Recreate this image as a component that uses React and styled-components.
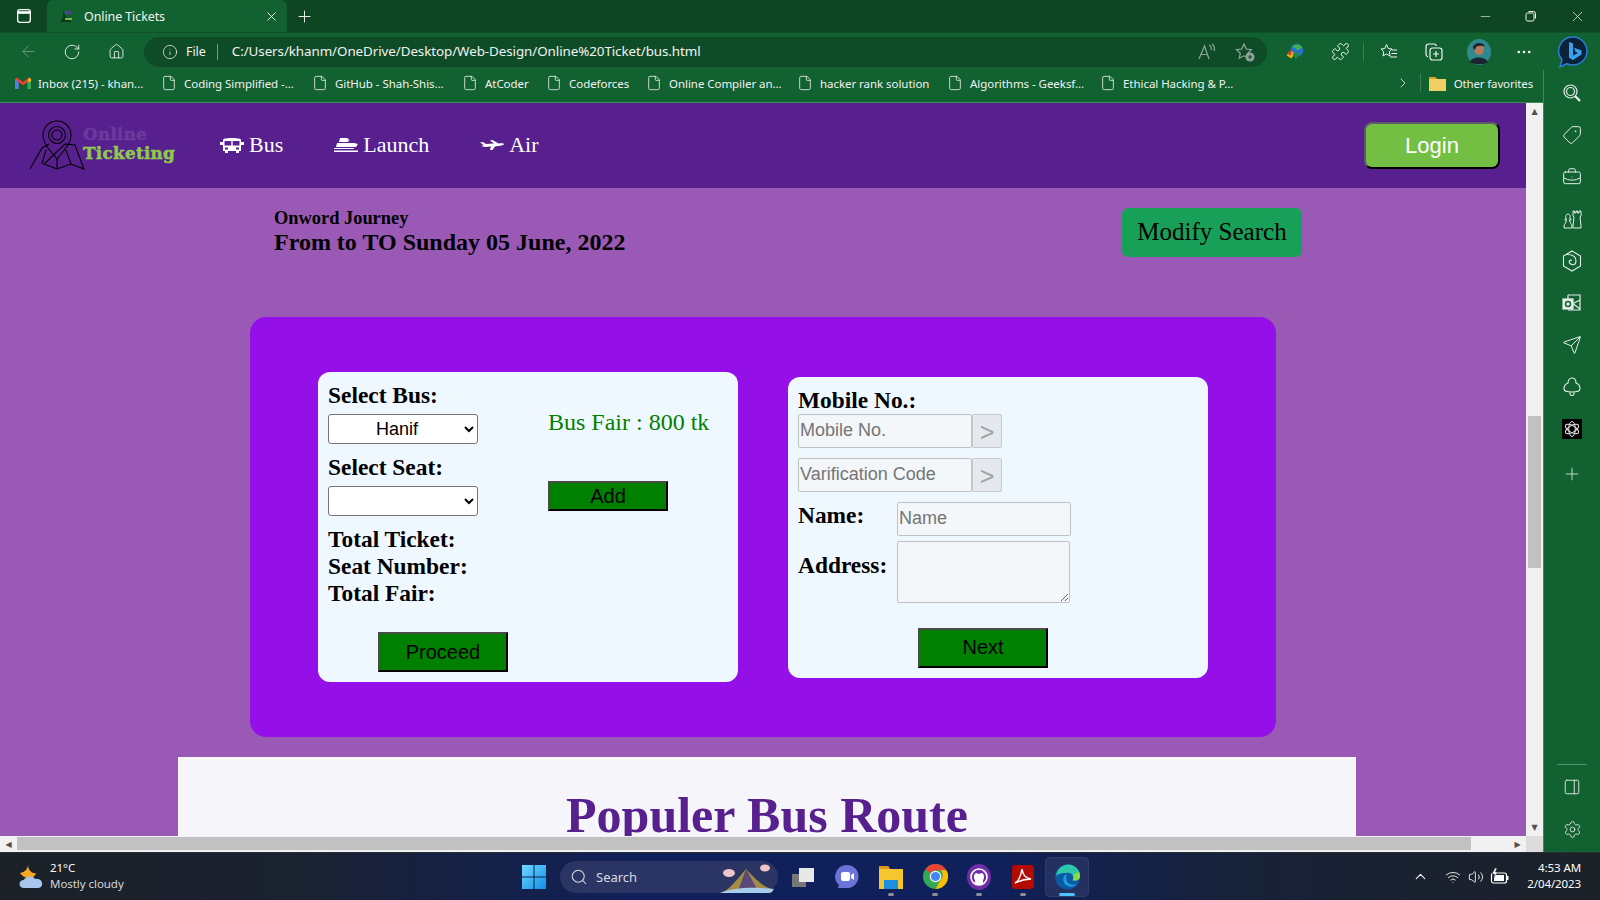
import React from 'react';
import styled, { createGlobalStyle } from 'styled-components';
import { ArrowLeft, RotateCw, Home, Info, Plus, X, Minus, Puzzle, ChevronRight, ChevronUp, Tag, BriefcaseBusiness, Send, Search, PanelRight, Settings, File, MoreHorizontal, Volume2, Wifi } from 'lucide-react';

const Global = createGlobalStyle`
  html, body { margin: 0; padding: 0; overflow: hidden; background: #116131; }
  * { box-sizing: border-box; }
  #root { width: 1600px; height: 900px; }
`;
const UI = `"Noto Sans", "Open Sans", sans-serif`;
const Serif = `"Liberation Serif", serif`;
const Sans = `"Liberation Sans", Arial, sans-serif`;

const Shell = styled.div`
  width: 1600px; height: 900px; display: flex; flex-direction: column; overflow: hidden;
  font-family: ${UI}; color: #fff;
`;
const TabStrip = styled.div`
  height: 32px; flex: none; display: flex; align-items: stretch; background: #0e4522;
`;
const Slot = styled.div`
  flex: none; width: ${p => p.$w}px; display: flex; align-items: center; justify-content: center;
  color: ${p => p.$c || '#f2f6f3'}; margin-left: ${p => p.$ml || 0}px;
`;
const Tab = styled.div`
  width: 240px; flex: none; background: #116131; border-radius: 6px 6px 0 0;
  display: flex; align-items: center; padding: 0 8px 0 11px; font-size: 12.5px;
`;
const TabTitle = styled.span`
  flex: 1; margin-left: 10px; letter-spacing: -0.1px; color: #f3f3f3;
`;
const WindowControls = styled.div`
  margin-left: auto; display: flex;
`;
const Toolbar = styled.div`
  height: 38px; flex: none; display: flex; align-items: center; background: #116131;
  border-top: 1px solid #0f5229; padding-left: 6px;
`;
const Address = styled.div`
  width: 1123px; height: 30px; margin-left: 6px; border-radius: 15px; background: #0e4c28;
  display: flex; align-items: center; font-size: 12.5px; color: #f2f2f2; flex: none;
`;
const AddrFile = styled.span`
  margin-left: 7px; letter-spacing: -0.05px;
`;
const AddrSep = styled.span`
  width: 1px; height: 16px; background: #6f9a80; margin: 0 14px 0 11px;
`;
const AddrUrl = styled.span`
  flex: 1; font-size: 13.4px; letter-spacing: -0.08px; white-space: nowrap; padding-bottom: 2px;
`;
const VSep = styled.span`
  width: 1px; height: 18px; background: #3d7c57; flex: none; margin: ${p => p.$m || '0'};
`;
const Body = styled.div`
  flex: 1; display: flex; min-height: 0;
`;
const Main = styled.div`
  width: 1543px; flex: none; display: flex; flex-direction: column; min-height: 0;
`;
const Bookmarks = styled.div`
  height: 33px; flex: none; background: #116131; border-bottom: 1px solid #3b8a5c;
  display: flex; align-items: center; font-size: 11.5px; color: #f2f2f2; padding: 0 0 6px 15px;
`;
const Bookmark = styled.div`
  width: ${p => p.$w}px; flex: none; display: flex; align-items: center; white-space: nowrap; letter-spacing: -0.05px;
  svg { flex: none; margin-right: ${p => p.$gap || 7}px; }
`;
const BookmarksEnd = styled.div`
  margin-left: auto; display: flex; align-items: center; padding-right: 10px;
`;
const FavLabel = styled.span`
  letter-spacing: -0.15px; margin-left: 8px;
`;
const ViewRow = styled.div`
  flex: 1; display: flex; min-height: 0;
`;
const Page = styled.div`
  width: 1526px; flex: none; background: #9b59b6; overflow: hidden; color: #000; font-family: ${Serif};
`;
const SiteHeader = styled.header`
  height: 85px; background: #58208e; display: flex; align-items: center; padding: 0 26px 0 28px;
`;
const Logo = styled.div`
  width: 172px; flex: none; display: flex; align-items: center;
`;
const LogoText = styled.div`
  margin: 0 0 3px -3px; font-family: "DejaVu Serif", serif; font-weight: 900; font-size: 16.8px; line-height: 19px;
  letter-spacing: 0.3px;
`;
const LogoWord = styled.div`
  color: ${p => p.$c}; -webkit-text-stroke: 0.5px ${p => p.$c};
`;
const Nav = styled.nav`
  display: flex; align-items: center; gap: 51px; margin-left: 20px; padding-bottom: 2px; color: #fff; font-size: 22px;
`;
const NavItem = styled.a`
  display: flex; align-items: center; gap: 5px;
`;
const LoginBtn = styled.button`
  margin-left: auto; width: 136px; height: 47px; border-radius: 8px; background: #72bf44; color: #fff;
  font: 22px ${Sans}; border: 2.5px solid; border-color: #5f5a6b #000 #000 #5f5a6b;
`;
const SearchRow = styled.section`
  margin: 20px 0 60px 274px; width: 1028px; height: 49px; display: flex; justify-content: space-between;
`;
const JourneyLine = styled.div`
  font-weight: bold; font-size: 18.4px; line-height: 20px;
`;
const JourneyDate = styled.div`
  font-weight: bold; font-size: 24px; line-height: 26px; margin-top: 1px;
`;
const ModifyBtn = styled.button`
  width: 180px; height: 49px; border: none; border-radius: 6px; background: #18a058; color: #000;
  font: 25px ${Serif}; padding: 0 0 2px;
`;
const Panel = styled.section`
  margin-left: 250px; width: 1026px; height: 420px; background: #9510e8; border-radius: 16px;
  display: flex; align-items: flex-start; gap: 50px; padding-left: 68px;
`;
const Card = styled.div`
  width: 420px; height: ${p => p.$h}px; margin-top: ${p => p.$top}px; background: #f0f8ff; border-radius: 12px;
  padding: 10px; display: flex;
`;
const Col = styled.div`
  width: ${p => p.$w}px; flex: none; display: flex; flex-direction: column; align-items: flex-start;
`;
const Label = styled.div`
  font-weight: bold; font-size: 23.4px; line-height: 27px; margin-top: ${p => p.$mt || 0}px; white-space: nowrap;
  width: ${p => p.$w ? p.$w + 'px' : 'auto'}; flex: none;
`;
const Select = styled.select`
  width: 150px; height: 30px; margin-top: 5px; background: #fff; border: 1px solid #767676; border-radius: 3px;
  font: 18px ${Sans}; color: #000; text-align: center;
`;
const GreenBtn = styled.button`
  width: ${p => p.$w}px; height: ${p => p.$h}px; margin: ${p => p.$m}; background: #008000; color: #000;
  font: 20px ${Sans}; padding: 0 0 ${p => p.$pb || 0}px; border: 2px solid; border-color: #4a4a4a #000 #000 #4a4a4a;
`;
const Fare = styled.div`
  font-size: 24px; line-height: 28px; color: #008000; margin-top: 26px; white-space: nowrap;
`;
const FieldRow = styled.div`
  display: flex; align-items: flex-start; margin-top: ${p => p.$mt || 0}px;
`;
const TextField = styled.input`
  width: ${p => p.$w || 174}px; height: 34px; background: #f3f7fa; border: 1px solid #bfc3c8; border-radius: 2px;
  font: 18px ${Sans}; padding: 0 1px 1px; outline: none;
  &::placeholder { color: #757575; }
`;
const GoBtn = styled.button`
  width: 30px; height: 34px; background: #e5e8ed; border: 1px solid #c6c9ce; border-radius: 2px; padding: 3px 0 0;
  color: #9fa2a8; font: 25px ${Sans};
`;
const AddressArea = styled.textarea`
  width: 173px; height: 62px; background: #f3f7fa; border: 1px solid #bfc3c8; border-radius: 2px; outline: none;
`;
const RouteSection = styled.section`
  margin: 20px 0 0 178px; width: 1178px; height: 200px; background: #f5f5fa; padding-top: 28px;
`;
const RouteTitle = styled.h2`
  margin: 0; text-align: center; font: bold 50px/60px ${Serif}; color: #58208e;
`;
const VScroll = styled.div`
  width: 17px; flex: none; background: #f1f1f1; display: flex; flex-direction: column; align-items: center; color: #505050;
`;
const Thumb = styled.div`
  width: 13px; height: 152px; margin-top: 296px; background: #c1c1c1;
`;
const ArrowV = styled.div`
  flex: none; height: 17px; width: 100%; display: flex; align-items: center; justify-content: center;
  font-size: 8px; line-height: 1; margin-top: ${p => p.$auto ? 'auto' : '0'}; font-family: "DejaVu Sans", sans-serif;
`;
const HScroll = styled.div`
  height: 16px; flex: none; background: #f1f1f1; display: flex; align-items: center; color: #505050;
`;
const HThumb = styled.div`
  width: 1454px; height: 13px; background: #c1c1c1; margin-bottom: 1px;
`;
const ArrowH = styled.div`
  width: 17px; flex: none; text-align: center; font-size: 8px; font-family: "DejaVu Sans", sans-serif;
`;
const HSpacer = styled.div`
  flex: 1;
`;
const Corner = styled.div`
  width: 17px; flex: none; height: 100%; background: #dcdcdc;
`;
const Sidebar = styled.aside`
  width: 57px; flex: none; background: #116131; border-left: 1px solid #3b8a5c;
  display: flex; flex-direction: column; align-items: center; padding: 2px 0; color: #e6eee9;
`;
const SideSlot = styled.div`
  height: ${p => p.$h || 42}px; width: 100%; display: flex; align-items: center; justify-content: center; flex: none;
`;
const FlippedTag = styled(Tag)`
  transform: scaleX(-1);
`;
const SideRule = styled.div`
  width: 30px; height: 1px; background: #4f9570; margin-top: auto; margin-bottom: 1px;
`;
const Taskbar = styled.footer`
  height: 48px; flex: none; display: flex; align-items: center; position: relative;
  background: linear-gradient(90deg, #1c2128 0, #1b2230 18%, #10205a 40%, #10205a 62%, #182238 78%, #1c2128 100%);
  border-top: 1px solid #2a3038;
`;
const Weather = styled.div`
  width: 522px; flex: none; display: flex; align-items: center; padding-left: 18px; font-size: 11.5px; line-height: 16px;
`;
const WeatherText = styled.div`
  margin: 0 0 2px 6px; letter-spacing: -0.05px;
  div:last-child { color: #d3d6da; }
`;
const WinBtn = styled.div`
  width: 38px; flex: none; display: flex;
`;
const SearchPill = styled.div`
  width: 218px; height: 32px; flex: none; border-radius: 16px; background: #2a3563; display: flex; align-items: center;
  padding: 0 2px 0 10px; font-size: 13px; color: #d7dae2; margin-right: 3px;
  span { margin-left: 8px; flex: 1; }
`;
const TaskIcon = styled.div`
  width: 44px; height: 40px; flex: none; display: flex; align-items: center; justify-content: center; position: relative;
  border-radius: 5px;
  ${p => p.$active && 'background: #24305f; box-shadow: inset 0 0 0 1px #303b68;'}
  &::after {
    content: ''; position: absolute; bottom: 1px; left: 50%; transform: translateX(-50%);
    width: ${p => p.$active ? 16 : 6}px; height: 3px; border-radius: 2px;
    background: ${p => p.$active ? '#4cc2ff' : p.$dot ? '#8a8f98' : 'transparent'};
  }
`;
const Tray = styled.div`
  margin-left: auto; display: flex; align-items: center; padding-right: 19px;
`;
const Clock = styled.div`
  text-align: right; font-size: 11.5px; line-height: 16px; margin: 0 0 2px 15px; letter-spacing: -0.1px;
`;

const PageIcon = () => <File size={16} strokeWidth={1.2} color="#f4f4f4" />;
const TabsIcon = () => (
  <svg width="16" height="16" viewBox="0 0 16 16" fill="none" stroke="#fff" strokeWidth="1.300">
    <rect x="1.700" y="1.700" width="12.600" height="12.600" rx="2" /><path d="M1.700 4.500h12.600" strokeWidth="2.600" />
  </svg>
);
const RestoreIcon = () => (
  <svg width="12" height="12" viewBox="0 0 12 12" fill="none" stroke="#f2f6f3" strokeWidth="1">
    <rect x="1" y="3" width="8" height="8" rx="1.500" /><path d="M3.500 1.500h5a2 2 0 0 1 2 2v5" />
  </svg>
);
const BusIcon = () => (
  <svg width="24" height="16" viewBox="0 0 24 16">
    <path fillRule="evenodd" fill="#fff" d="M3 2.500C5 .5 19 .5 21 2.500V5h3v3h-3v6h-2v2h-3v-2H8v2H5v-2H3V8H0V5h3zM4.500 4v4.500h6.800V4zM12.700 4v4.500h6.800V4zM5 10.500v2h3v-2zM16 10.500v2h3v-2z" />
  </svg>
);
const ShipIcon = () => (
  <svg width="24" height="14" viewBox="0 0 24 14" fill="#fff">
    <path d="M6 0h7l3 2.500h-2.500L15 4H5zM3 5h17l4 1-2 3H2zM0 10h20v1H0zM0 12.500h24V14H0z" />
  </svg>
);
const PlaneIcon = () => (
  <svg width="24" height="12" viewBox="0 0 24 12" fill="#fff">
    <path d="M0 3.500L3 3l3 2 8-.5L10 1.500 12.500 1l6 3.500c3-.6 5.500-.4 5.500.5s-3 2-6 2l-3 .5-2.500 3.500H10l1-3.500-6 .5-3.500-1L3.500 6z" />
  </svg>
);
const Gmail = () => (
  <svg width="16" height="14" viewBox="0 0 16 12">
    <path d="M0 2v10h3.500V5L8 8.300 12.500 5v7H16V2l-2-1.600L8 5 2 .4z" fill="#ea4335" />
    <path d="M0 2v10h3.500V5z" fill="#4285f4" /><path d="M16 2v10h-3.500V5z" fill="#34a853" />
    <path d="M12.500 5L14 .4 16 2v2.400z" fill="#fbbc04" />
  </svg>
);
const FavIcon = () => (
  <svg width="16" height="16" viewBox="0 0 16 16">
    <path d="M2 14l3-5V3l3 6 3 2 3 3z" fill="#0a3a1d" /><rect x="7" y="3" width="6" height="3" fill="#5c3a9a" /><rect x="7" y="10" width="7" height="2" fill="#74b84a" />
  </svg>
);
const Bulk = ({ size = 22 }) => (
  <svg width={size} height={size} viewBox="0 0 24 24">
    <circle cx="14" cy="10" r="7" fill="#2a6fd0" /><path d="M9 6a7 7 0 0 1 11 1l-5 3z" fill="#3db24a" />
    <path d="M3 16c3-7 7-7 8-1l-3 4z" fill="#e8b020" /><path d="M9 14l4 6 5-8z" fill="#1f8f3a" /><path d="M4 14c1-3 3-4 5-4l-2 6z" fill="#d83a2a" />
  </svg>
);
const ReadAloud = () => (
  <svg width="20" height="20" viewBox="0 0 20 20" fill="none" stroke="#8fa89a" strokeWidth="1.200">
    <path d="M2 17L7.500 4 12 17M4 12.500h7" /><path d="M12 3c2 1 2.500 3 2 5M15 2c2.500 2 3 4 2 7" />
  </svg>
);
const StarAdd = () => (
  <svg width="20" height="20" viewBox="0 0 20 20" fill="none" stroke="#8fa89a" strokeWidth="1.200">
    <path d="M9 2l2.300 5 5.200.6-3.800 3.600 1 5L9 13.800l-4.700 2.400 1-5L1.500 7.600 6.700 7z" />
    <circle cx="15" cy="15" r="4.500" fill="#8fa89a" stroke="none" /><path d="M15 12.700v4.600M12.700 15h4.600" stroke="#0e4c28" />
  </svg>
);
const FavList = () => (
  <svg width="20" height="20" viewBox="0 0 20 20" fill="none" stroke="#f4f4f4" strokeWidth="1">
    <path d="M7.500 2.500l1.800 4 3.700.5-2.700 2.600.7 4.400-3.500-2-3.500 2 .7-4.400L2 7l3.700-.5zM13 8h5M12.500 11.500h5.500M11 15h7" />
  </svg>
);
const Collections = () => (
  <svg width="20" height="20" viewBox="0 0 20 20" fill="none" stroke="#f4f4f4" strokeWidth="1.200">
    <path d="M4 15c-1.500-.5-2-1.500-2-3V5c0-2 1-3 3-3h5c1 0 2 .5 2.500 2" /><rect x="6" y="6" width="12" height="12" rx="2.500" /><path d="M12 9v6M9 12h6" />
  </svg>
);
const Avatar = () => (
  <svg width="24" height="26" viewBox="0 0 24 26">
    <ellipse cx="12" cy="13" rx="12" ry="13" fill="#2f8a8f" /><ellipse cx="12" cy="10" rx="5" ry="6" fill="#b77a58" />
    <path d="M6 9c0-6 11-7 12-1-3-2-7-1-9 0l-1 3zM3 23c2-6 15-6 18 0-3 3-15 3-18 0z" fill="#1a2430" />
  </svg>
);
const Bing = () => (
  <svg width="32" height="34" viewBox="0 0 32 34">
    <path d="M16 2a14 14 0 1 1-6 26.700L3 32l2-7A14 14 0 0 1 16 2z" fill="#0c2238" stroke="#2b7bd8" strokeWidth="1.500" />
    <path d="M12 7l4 1.500v12l5-2.500-2.500-1.200-1.500-4 7.500 2.800v4L16 25l-4-2.200z" fill="#3aa3f0" />
  </svg>
);
const Folder = () => (
  <svg width="17" height="15" viewBox="0 0 17 15"><path d="M0 1h6l2 2h9v12H0z" fill="#f2cf62" /><path d="M0 1h6l2 2H0z" fill="#d9a520" /></svg>
);
const LogoMark = () => (
  <svg width="58" height="52" viewBox="0 0 58 52" fill="none" stroke="#000" strokeWidth="1.100">
    <path d="M29 39C21 29 15 24 15 15a14 14 0 0 1 28 0c0 9-6 14-14 24z" />
    <circle cx="29" cy="15" r="8.500" /><circle cx="29" cy="15" r="5" />
    <path d="M2 49L14 28l7-4M37 24l10 1 9 24-13-5-14 5-13-5zM29 39v10M14 44l4-14M43 44l-5-14" />
  </svg>
);
const Rooks = () => (
  <svg width="22" height="22" viewBox="0 0 22 22" fill="none" stroke="#e6eee9" strokeWidth="1">
    <path d="M12 3h1.500v2H15V3h1.500v2H18V3h2v5l-1 1 1 9v2h-8v-2l1-9-1-1zM3 20v-2c0-2 2-2.500 2.500-6H4v-1h1.500C4 9 5 6 7 6s3 3 1.500 5H10v1H8.500c.5 3.500 2.500 4 2.500 6v2z" />
  </svg>
);
const OfficeLogo = () => (
  <svg width="20" height="22" viewBox="0 0 20 22" fill="none" stroke="#e6eee9" strokeWidth="1.100">
    <path d="M10 1l8.500 5v10L10 21l-8.500-5V6zM5 4.500c5 0 9 2 9 6.500s-4 4.500-6 2.500 0-4 2-3" />
  </svg>
);
const Outlook = () => (
  <svg width="20" height="20" viewBox="0 0 20 20" fill="none" stroke="#e6eee9" strokeWidth="1.200">
    <path d="M6 2h12v15H6" /><path d="M10 10l8 6M18 7l-8 4M6 2v4" /><rect x="1" y="6" width="10" height="10" fill="#e6eee9" />
    <circle cx="6" cy="11" r="2.500" stroke="#116131" strokeWidth="1.500" />
  </svg>
);
const TreeBell = () => (
  <svg width="18" height="20" viewBox="0 0 18 20" fill="none" stroke="#e6eee9" strokeWidth="1.100">
    <path d="M9 1c3 0 4 3 4 5 3 1 4 4 4 6 0 2-2 3-8 3s-8-1-8-3c0-2 1-5 4-6 0-2 1-5 4-5zM7 15v2c0 2 4 2 4 0v-2" />
  </svg>
);
const OpenAI = () => (
  <svg width="20" height="20" viewBox="0 0 20 20">
    <rect width="20" height="20" fill="#000" />
    <g fill="none" stroke="#e5e5e5" strokeWidth="1">
      <ellipse cx="10" cy="10" rx="3.300" ry="7.500" /><ellipse cx="10" cy="10" rx="3.300" ry="7.500" transform="rotate(60 10 10)" /><ellipse cx="10" cy="10" rx="3.300" ry="7.500" transform="rotate(120 10 10)" />
    </g>
  </svg>
);
const SideSearch = () => (
  <svg width="20" height="20" viewBox="0 0 20 20" fill="none" stroke="#e6eee9" strokeWidth="1.200">
    <circle cx="8.500" cy="8.500" r="6.500" /><circle cx="8.500" cy="8.500" r="4" /><path d="M13 13l5 5" strokeWidth="2.400" />
  </svg>
);
const WeatherIcon = () => (
  <svg width="26" height="26" viewBox="0 0 26 26">
    <path d="M10 1c-1 5-3 7-8 8 2 3 5 5 9 5 4 0 6-2 7-5-4 1-8-3-8-8z" fill="#f5a623" />
    <path d="M6 24c-6 0-6-8 0-8 1-4 9-5 11-1 5-1 8 3 7 6-.5 2-2 3-4 3z" fill="#a9c6ee" />
  </svg>
);
const WinLogo = () => (
  <svg width="24" height="24" viewBox="0 0 24 24">
    <defs><linearGradient id="w" x1="0" y1="0" x2="1" y2="1"><stop offset="0" stopColor="#6fd8ff" /><stop offset="1" stopColor="#0f8fe8" /></linearGradient></defs>
    <path d="M0 0h11.500v11.500H0zM12.500 0H24v11.500H12.500zM0 12.500h11.500V24H0zM12.500 12.500H24V24H12.500z" fill="url(#w)" />
  </svg>
);
const Mountain = () => (
  <svg width="56" height="32" viewBox="0 0 56 32">
    <path d="M0 32c8-2 14-10 26-24 8 8 16 18 26 20 2 2 0 4-4 4z" fill="#a58a45" />
    <path d="M26 8l-8 22h20z" fill="#5b4a78" /><path d="M0 32c14-6 34-6 54-4-2 3-4 4-6 4z" fill="#a7cdec" />
    <ellipse cx="9" cy="12" rx="6" ry="4" fill="#f0c4c8" /><ellipse cx="45" cy="7" rx="5" ry="3.500" fill="#f0c4c8" />
  </svg>
);
const TaskView = () => (
  <svg width="24" height="24" viewBox="0 0 24 24"><rect x="1" y="9" width="14" height="13" fill="#777" /><rect x="8" y="3" width="15" height="14" fill="#e8e8e8" /></svg>
);
const Meet = () => (
  <svg width="24" height="26" viewBox="0 0 24 26">
    <path d="M12 1a11.500 11.500 0 0 1 0 23H3l1-3a11.500 11.500 0 0 1 8-20z" fill="#6b72d8" />
    <rect x="6" y="8" width="9" height="9" rx="2" fill="#fff" /><path d="M16 11l3-2v7l-3-2z" fill="#fff" />
  </svg>
);
const Explorer = () => (
  <svg width="24" height="24" viewBox="0 0 24 24">
    <path d="M0 1h9l2 3h13v20H0z" fill="#f7c62f" /><path d="M0 1h9l2 3H0z" fill="#d69a14" /><rect x="5" y="15" width="14" height="9" fill="#1d8fe0" />
  </svg>
);
const Chrome = () => (
  <svg width="25" height="25" viewBox="0 0 24 24">
    <circle cx="12" cy="12" r="12" fill="#34a853" /><path d="M12 0a12 12 0 0 1 10.400 6H12a6 6 0 0 0-5.200 3L2.500 5A12 12 0 0 1 12 0z" fill="#ea4335" />
    <path d="M22.400 6A12 12 0 0 1 12 24l5-9a6 6 0 0 0 0-9z" fill="#fbbc04" /><circle cx="12" cy="12" r="5.500" fill="#fff" /><circle cx="12" cy="12" r="4.400" fill="#4285f4" />
  </svg>
);
const Github = () => (
  <svg width="24" height="26" viewBox="0 0 24 26">
    <ellipse cx="12" cy="13" rx="12" ry="13" fill="#6f2da8" /><circle cx="12" cy="13" r="8" fill="none" stroke="#fff" strokeWidth="1.600" />
    <path d="M8 21v-5c-2-2-1-6 1-7l3 1 3-1c2 1 3 5 1 7v5" fill="#fff" />
  </svg>
);
const Pdf = () => (
  <svg width="22" height="24" viewBox="0 0 22 24">
    <rect width="22" height="24" rx="3" fill="#b30b00" />
    <path d="M3 18c3-1 6-7 7-14 1 6 3 9 9 10-5 0-10 1-16 4z" fill="none" stroke="#fff" strokeWidth="1.500" />
  </svg>
);
const Edge = () => (
  <svg width="25" height="26" viewBox="0 0 24 24">
    <circle cx="12" cy="12" r="12" fill="#0c59a4" /><path d="M1 11C2 4 7 0 13 0c6 0 11 5 11 11 0 4-4 5-7 4 2-3 0-7-5-7-5 0-9 1-11 3z" fill="#2fc6a9" />
    <path d="M24 11c0 4-4 5-7 4 1-2 1-4 0-5l6-3c.6 1 1 2.500 1 4z" fill="#7fdc4a" /><path d="M11 9c-4 2-4 8 0 11 3 2 7 2 10-1-4 1-9 0-10-4-.5-2 0-4 0-6z" fill="#1b9de2" />
  </svg>
);
const Battery = () => (
  <svg width="20" height="18" viewBox="0 0 20 18">
    <rect x="1.500" y="5" width="15" height="10" rx="2" fill="none" stroke="#fff" strokeWidth="1.200" /><rect x="4" y="7" width="10" height="6" fill="#fff" />
    <rect x="17" y="8" width="1.500" height="4" fill="#fff" /><path d="M5 0L2 6h2.500L3.500 10 8 4H5.500L7 0z" fill="#fff" stroke="#1c2128" strokeWidth=".5" />
  </svg>
);

const bookmarks = [
  { w: 146, t: 'Inbox (215) - khan...', g: 1, gap: 7 },
  { w: 151, t: 'Coding Simplified -...' }, { w: 150, t: 'GitHub - Shah-Shis...' }, { w: 84, t: 'AtCoder' },
  { w: 100, t: 'Codeforces' }, { w: 151, t: 'Online Compiler an...' }, { w: 150, t: 'hacker rank solution' },
  { w: 153, t: 'Algorithms - Geeksf...' }, { w: 150, t: 'Ethical Hacking & P...' },
];
const sideIcons = [<SideSearch />, <FlippedTag size={20} strokeWidth={1.2} />, <BriefcaseBusiness size={20} strokeWidth={1.2} />, <Rooks />, <OfficeLogo />, <Outlook />, <Send size={20} strokeWidth={1.2} />, <TreeBell />, <OpenAI />];

export default function App() {
  return (
    <Shell>
      <Global />
      <TabStrip>
        <Slot $w={47}><TabsIcon /></Slot>
        <Tab><FavIcon /><TabTitle>Online Tickets</TabTitle><X size={15} strokeWidth={1.4} /></Tab>
        <Slot $w={34}><Plus size={19} strokeWidth={1.2} /></Slot>
        <WindowControls>
          <Slot $w={46}><Minus size={15} strokeWidth={1} /></Slot>
          <Slot $w={46}><RestoreIcon /></Slot>
          <Slot $w={46}><X size={17} strokeWidth={1} /></Slot>
        </WindowControls>
      </TabStrip>
      <Toolbar>
        <Slot $w={44} $c="#6f9a80"><ArrowLeft size={19} strokeWidth={1.2} /></Slot>
        <Slot $w={44}><RotateCw size={18} strokeWidth={1.2} /></Slot>
        <Slot $w={44}><Home size={17} strokeWidth={1.2} /></Slot>
        <Address>
          <Slot $w={19} $ml={16}><Info size={16} strokeWidth={1.1} /></Slot>
          <AddrFile>File</AddrFile><AddrSep />
          <AddrUrl>C:/Users/khanm/OneDrive/Desktop/Web-Design/Online%20Ticket/bus.html</AddrUrl>
          <Slot $w={38}><ReadAloud /></Slot>
          <Slot $w={38}><StarAdd /></Slot>
          <Slot $w={3} />
        </Address>
        <Slot $w={44} $ml={6}><Bulk /></Slot>
        <Slot $w={46}><Puzzle size={19} strokeWidth={1.2} /></Slot>
        <VSep />
        <Slot $w={49}><FavList /></Slot>
        <Slot $w={41}><Collections /></Slot>
        <Slot $w={49}><Avatar /></Slot>
        <Slot $w={41}><MoreHorizontal size={18} strokeWidth={1.6} /></Slot>
        <Slot $w={57}><Bing /></Slot>
      </Toolbar>
      <Body>
        <Main>
          <Bookmarks>
            {bookmarks.map(b => (
              <Bookmark key={b.t} $w={b.w} $gap={b.gap}>{b.g ? <Gmail /> : <PageIcon />}{b.t}</Bookmark>
            ))}
            <BookmarksEnd>
              <ChevronRight size={16} strokeWidth={1.2} />
              <VSep $m="0 8px 0 9px" />
              <Folder />
              <FavLabel>Other favorites</FavLabel>
            </BookmarksEnd>
          </Bookmarks>
          <ViewRow>
            <Page>
              <SiteHeader>
                <Logo>
                  <LogoMark />
                  <LogoText>
                    <LogoWord $c="#6b3a9f">Online</LogoWord>
                    <LogoWord $c="#8fc94f">Ticketing</LogoWord>
                  </LogoText>
                </Logo>
                <Nav>
                  <NavItem><BusIcon />Bus</NavItem>
                  <NavItem><ShipIcon />Launch</NavItem>
                  <NavItem><PlaneIcon />Air</NavItem>
                </Nav>
                <LoginBtn>Login</LoginBtn>
              </SiteHeader>
              <SearchRow>
                <div>
                  <JourneyLine>Onword Journey</JourneyLine>
                  <JourneyDate>From to TO Sunday 05 June, 2022</JourneyDate>
                </div>
                <ModifyBtn>Modify Search</ModifyBtn>
              </SearchRow>
              <Panel>
                <Card $h={310} $top={55}>
                  <Col $w={220}>
                    <Label>Select Bus:</Label>
                    <Select defaultValue="Hanif"><option>Hanif</option></Select>
                    <Label $mt={10}>Select Seat:</Label>
                    <Select><option></option></Select>
                    <Label $mt={10}>Total Ticket:</Label>
                    <Label>Seat Number:</Label>
                    <Label>Total Fair:</Label>
                    <GreenBtn $w={130} $h={40} $m="25px 0 0 50px">Proceed</GreenBtn>
                  </Col>
                  <Col $w={170}>
                    <Fare>Bus Fair : 800 tk</Fare>
                    <GreenBtn $w={120} $h={30} $m="45px 0 0 0">Add</GreenBtn>
                  </Col>
                </Card>
                <Card $h={301} $top={60}>
                  <Col $w={400}>
                    <Label>Mobile No.:</Label>
                    <FieldRow><TextField placeholder="Mobile No." /><GoBtn>&gt;</GoBtn></FieldRow>
                    <FieldRow $mt={10}><TextField placeholder="Varification Code" /><GoBtn>&gt;</GoBtn></FieldRow>
                    <FieldRow $mt={10}><Label $w={99}>Name:</Label><TextField placeholder="Name" /></FieldRow>
                    <FieldRow $mt={5}><Label $w={99} $mt={11}>Address:</Label><AddressArea /></FieldRow>
                    <GreenBtn $w={130} $h={40} $m="25px 0 0 120px" $pb={2}>Next</GreenBtn>
                  </Col>
                </Card>
              </Panel>
              <RouteSection><RouteTitle>Populer Bus Route</RouteTitle></RouteSection>
            </Page>
            <VScroll>
              <ArrowV>▲</ArrowV>
              <Thumb />
              <ArrowV $auto>▼</ArrowV>
            </VScroll>
          </ViewRow>
          <HScroll>
            <ArrowH>◀</ArrowH>
            <HThumb />
            <HSpacer />
            <ArrowH>▶</ArrowH>
            <Corner />
          </HScroll>
        </Main>
        <Sidebar>
          {sideIcons.map((ic, i) => <SideSlot key={i}>{ic}</SideSlot>)}
          <SideSlot $h={48}><Plus size={20} strokeWidth={1} /></SideSlot>
          <SideRule />
          <SideSlot><PanelRight size={18} strokeWidth={1.2} /></SideSlot>
          <SideSlot><Settings size={19} strokeWidth={1.1} /></SideSlot>
        </Sidebar>
      </Body>
      <Taskbar>
        <Weather>
          <WeatherIcon />
          <WeatherText><div>21°C</div><div>Mostly cloudy</div></WeatherText>
        </Weather>
        <WinBtn><WinLogo /></WinBtn>
        <SearchPill><Search size={18} strokeWidth={1.4} /><span>Search</span><Mountain /></SearchPill>
        <TaskIcon><TaskView /></TaskIcon>
        <TaskIcon><Meet /></TaskIcon>
        <TaskIcon $dot><Explorer /></TaskIcon>
        <TaskIcon $dot><Chrome /></TaskIcon>
        <TaskIcon $dot><Github /></TaskIcon>
        <TaskIcon $dot><Pdf /></TaskIcon>
        <TaskIcon $active><Edge /></TaskIcon>
        <Tray>
          <Slot $w={41}><ChevronUp size={17} strokeWidth={1.6} /></Slot>
          <Slot $w={23}><Wifi size={16} strokeWidth={1.4} /></Slot>
          <Slot $w={24}><Volume2 size={16} strokeWidth={1.4} /></Slot>
          <Slot $w={24}><Battery /></Slot>
          <Clock><div>4:53 AM</div><div>2/04/2023</div></Clock>
        </Tray>
      </Taskbar>
    </Shell>
  );
}
